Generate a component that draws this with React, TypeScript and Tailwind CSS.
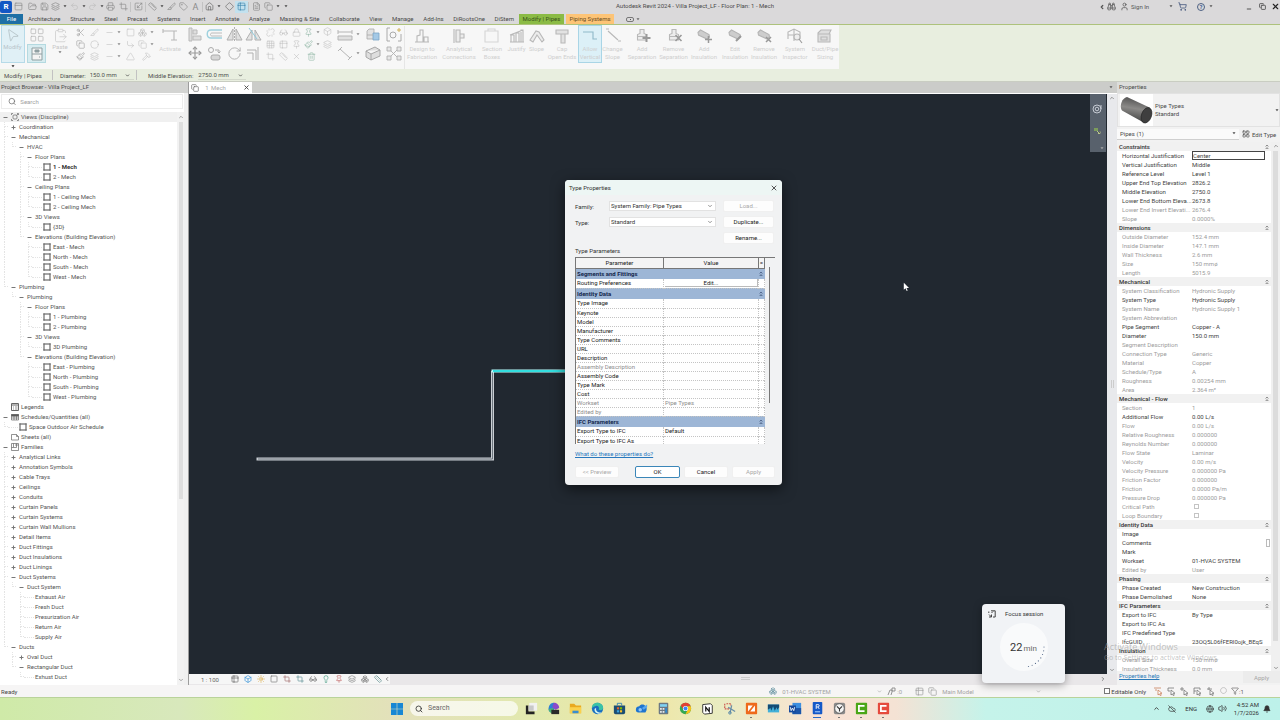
import React from "react";
import type { ReactNode } from "react";
import {
  Box, Boxes, Binoculars, User, ShoppingCart, Volume2, Globe, Bell, ChevronUp, ChevronDown, ChevronLeft, ChevronRight,
  Sun, Glasses, Save, FolderOpen, Undo2, Redo2, Printer, Ruler, House, Search, Scissors, Copy, Move, RotateCw, X, Lock,
  Grid3x3, Paintbrush, MousePointer2, Square, Filter, Pin, Minus, Layers, Table2, Trash2,
  Diamond, ClipboardPaste, Lightbulb, CloudOff, Circle, Crop, Tag, Scaling, Triangle, Hammer, LayoutGrid,
  CornerDownRight, Unlink, FileText, PanelTop, Slice,
} from "lucide-react";

type IconType = React.ComponentType<{ size?: number; strokeWidth?: number; className?: string }>;

/* ---------- shared bits ---------- */

const Caret = ({ className = "" }: { className?: string }) => (
  <svg width="4" height="3" viewBox="0 0 4 3" className={`shrink-0 ${className}`} aria-hidden="true">
    <path d="M.5.300h3L2 2.300z" fill="currentColor" />
  </svg>
);

const Collapse = () => (
  <svg width="4" height="6" viewBox="0 0 4 6" fill="none" stroke="currentColor" strokeWidth=".7" className="relative" aria-hidden="true">
    <path d="M.8 2.400 2 1.200l1.200 1.200M.8 4.900 2 3.700l1.200 1.200" />
  </svg>
);

/* ---------- title bar ---------- */

const Quick = ({ icon: I, w, caret, on }: { icon: IconType; w: string; caret?: boolean; on?: boolean }) => (
  <button className={`flex h-[12px] shrink-0 items-center justify-center gap-[3px] ${w} ${on ? "bg-[#c3e1ee] text-[#3f87b0]" : ""}`}>
    <I size={9} strokeWidth={1.8} />
    {caret && <Caret className="text-[#444]" />}
  </button>
);

const Divider = () => <span className="h-[10px] w-px shrink-0 bg-[#c2c2c2]" />;

const TitleBar = () => (
  <header className="flex h-[13px] shrink-0 items-center bg-[#dad9da] text-[#8a8a8a]">
    <div className="flex items-center">
      <button className="flex h-[12px] w-[12px] items-center justify-center rounded-[2px] bg-[#1257c4] text-[8px] font-bold leading-none text-white">R</button>
      <Quick icon={PanelTop} w="w-[13px]" />
      <Quick icon={FolderOpen} w="w-[14px]" />
      <Quick icon={Save} w="w-[11px]" />
      <Quick icon={Layers} w="w-[18px]" caret />
      <div className="flex text-[#bdbdbd]">
        <Quick icon={Undo2} w="w-[19px]" caret />
        <Quick icon={Redo2} w="w-[17px]" caret />
      </div>
      <Quick icon={Printer} w="w-[12px]" />
      <Quick icon={Crop} w="w-[14px]" />
      <Divider />
      <Quick icon={Scaling} w="w-[14px]" />
      <Divider />
      <Quick icon={Ruler} w="w-[19px]" caret />
      <Quick icon={Slice} w="w-[12px]" />
      <Quick icon={Tag} w="w-[12px]" />
      <button className="w-[13px] text-[9px] leading-[12px]">A</button>
      <Divider />
      <div className="flex text-[#666]">
        <Quick icon={House} w="w-[20px]" caret />
        <Quick icon={Diamond} w="w-[12px]" />
      </div>
      <Quick icon={Table2} w="w-[13px]" on />
      <Divider />
      <Quick icon={FileText} w="w-[14px]" />
      <Quick icon={Copy} w="w-[18px]" caret />
      <button className="flex w-[10px] justify-center text-[#444]" aria-label="Customize"><Caret /></button>
    </div>
    <h1 className="h-[11px] flex-1 text-center leading-[9px] text-[#4a4a4a]">Autodesk Revit 2024 - Villa Project_LF - Floor Plan: 1 - Mech</h1>
    <div className="flex items-center justify-end text-[#555]">
      <ChevronLeft size={6} strokeWidth={5} />
      <span className="flex w-[13px] justify-center"><Binoculars size={9} /></span>
      <span className="flex w-[13px] justify-center"><User size={9} /></span>
      <button className="w-[21px] whitespace-nowrap text-left">Sign In</button>
      <span className="flex w-[24px] justify-end pr-[3px]"><Caret /></span>
      <span className="flex w-[12px] justify-center text-[#3b4f78]"><ShoppingCart size={9} /></span>
      <button className="ml-[9px] flex h-[8px] w-[8px] items-center justify-center rounded-full border border-[#4d6183] text-[6px] font-bold leading-none text-[#3d5a94]">?</button>
      <span className="ml-[4px]"><Caret /></span>
      <button className="ml-[31px] flex w-[10px] justify-center pt-[4px]" aria-label="Minimize"><Minus size={6} strokeWidth={4} /></button>
      <button className="flex w-[16px] justify-center" aria-label="Restore"><Copy size={7} strokeWidth={3} /></button>
      <button className="flex w-[10px] justify-center text-[#222]" aria-label="Close"><X size={9} strokeWidth={3} /></button>
    </div>
  </header>
);

const TABS = ["Architecture", "Structure", "Steel", "Precast", "Systems", "Insert", "Annotate", "Analyze", "Massing & Site", "Collaborate", "View", "Manage", "Add-Ins", "DiRootsOne", "DiStem"];

const TabRow = () => (
  <nav className="flex h-[12px] shrink-0 items-stretch border-b border-[#adc27c] bg-[#dad9da] pt-px leading-[10px] text-[#484848]">
    <button className="w-[23px] shrink-0 bg-[#1d6fa5] text-white">File</button>
    <div className="ml-[5px] mr-[5px] flex w-[486px] shrink-0 justify-between">
      {TABS.map((t) => (
        <button key={t} className="whitespace-nowrap">{t}</button>
      ))}
    </div>
    <button className="w-[45px] whitespace-nowrap bg-[#8bbb45] text-[#37521a]">Modify | Pipes</button>
    <button className="ml-[2px] w-[48px] whitespace-nowrap bg-[#fdc476] text-[#6b4d1e]">Piping Systems</button>
    <button className="ml-[12px] flex items-center gap-[2px]" aria-label="Minimize ribbon">
      <span className="flex h-[5px] w-[8px] items-center justify-center rounded-[2px] border border-[#777]"><span className="h-px w-px bg-[#555]" /></span>
      <Caret className="text-[#666]" />
    </button>
  </nav>
);

/* ---------- ribbon ---------- */

const Stack = ({ w, icons, size = 9, tone = "text-[#bcbcbc]", carets = 0 }: { w: string; icons: IconType[]; size?: number; tone?: string; carets?: number }) => (
  <div className={`flex shrink-0 flex-col items-center ${w} ${tone} ${icons.length > 2 ? "gap-[3px] pt-[2px]" : "gap-[4px] pt-[1px]"}`}>
    {icons.map((I, i) => (
      <button key={i} className="flex items-center gap-[3px]">
        <I size={size} strokeWidth={1.4} />
        {i < carets && <Caret className="text-[#888]" />}
      </button>
    ))}
  </div>
);

const Tool = ({ w, lines, on, children }: { w: string; lines: string[]; on?: boolean; children: ReactNode }) => (
  <button className={`flex h-[36px] shrink-0 flex-col items-center whitespace-nowrap pt-px leading-[8px] text-[#cfcfcf] ${w} ${on ? "bg-[#dcf0f7] outline outline-[#a9d5e6]" : ""}`}>
    <svg width="18" height="18" viewBox="0 0 18 18" fill="none" stroke="#b8b8b8" strokeWidth="1.1" className="shrink-0" aria-hidden="true">{children}</svg>
    {lines.map((l) => <span key={l}>{l}</span>)}
  </button>
);

const pipe = <path d="M3 5.5 5.500 3 14 7.500 14.500 10 12 12 3.500 8z" fill="#cdcdcd" stroke="#b4b4b4" />;
const valve = <path d="M7 2.500h4v4l2.500 1V13h-9V7.500l2.500-1zM4.500 9.500h9" fill="#ececec" />;

const Ribbon = () => (
  <section className="flex h-[44px] shrink-0 overflow-hidden bg-[#e8eedf]" aria-label="Ribbon">
    <div className="flex bg-[#f7f7f7] pt-px">
      <div className="flex w-[26px] flex-col items-center gap-[2px] pr-px">
        <button className="flex h-[36px] w-[22px] flex-col items-center bg-[#e0f0f6] pt-[2px] leading-[8px] text-[#b7c3c9] outline outline-[#b6dae8]">
          <MousePointer2 size={15} strokeWidth={1} className="rotate-12 text-[#a9b6bb]" />
          Modify
        </button>
        <Caret className="mt-px text-[#222]" />
      </div>
      <div className="flex w-[21px] flex-col items-center gap-[2px] pt-px text-[#b0b0b0]">
        <button aria-label="Properties"><LayoutGrid size={16} strokeWidth={1} /></button>
        <button className="flex h-[17px] w-[17px] items-center justify-center bg-[#d7ecf0] outline outline-[#b4d9e0]" aria-label="Type Properties">
          <svg width="12" height="14" viewBox="0 0 12 14" fill="#f4f4f4" stroke="#8f9fa2"><path d="M1 1h10v12H1zM1 7h10" /><path d="M4 3h4v2H4zM8 10h1" fill="#8f9fa2" /></svg>
        </button>
      </div>
      <button className="flex w-[26px] flex-col items-center pt-[2px] leading-[8px] text-[#c6c6c6]">
        <ClipboardPaste size={15} strokeWidth={1.1} />
        Paste
        <Caret className="text-[#777]" />
      </button>
      <Stack w="w-[14px]" icons={[Scissors, Copy, Paintbrush]} tone="text-[#8f8f8f]" />
      <Stack w="w-[15px]" icons={[Slice, Circle, Layers]} />
      <Stack w="w-[22px]" icons={[Minus, Minus, Minus]} carets={3} />
      <Stack w="w-[13px]" icons={[Square, CornerDownRight, Triangle]} />
      <Stack w="w-[18px]" icons={[Boxes, Copy, Hammer]} carets={2} />
      <Tool w="w-[30px]" lines={["Activate"]}><path d="M2 4h11v9M2 2v4M13 4h3M10 13h6" /></Tool>
      <div className="flex w-[19px] flex-col items-center gap-[4px] pt-px text-[#999]">
        <svg width="15" height="15" viewBox="0 0 15 15" fill="#dedede" stroke="#b9b9b9" aria-hidden="true"><path d="M2 1h3v13H2zM6 9h8v4H6zM6 3h4v4H6z" /></svg>
        <Move size={14} strokeWidth={2} />
      </div>
      <div className="flex w-[21px] flex-col items-center gap-[4px] pt-px">
        <svg width="17" height="15" viewBox="0 0 17 15" fill="none" aria-hidden="true"><path d="M16 3H5C0 3 0 11 5 11h11" stroke="#9ed1de" strokeWidth="1.400" /><path d="M16 6H6c-2 0-2 3 0 3h10" stroke="#bbb" /></svg>
        <svg width="15" height="15" viewBox="0 0 15 15" fill="none" stroke="#ababab" aria-hidden="true"><circle cx="4" cy="4" r="2.500" /><path d="M8 4h4v3M10.500 5.500 12 7l1.500-1.500" /><rect x="4" y="9" width="9" height="5" rx="2" fill="#d6d6d6" /></svg>
      </div>
      <div className="flex w-[18px] flex-col items-center gap-[4px] pt-px text-[#b0b0b0]">
        <svg width="17" height="15" viewBox="0 0 17 15" fill="none" stroke="#b0b0b0" aria-hidden="true"><path d="M7 2v11H1zM10 2v11h6z" fill="#e0e0e0" /><path d="M8.500 0v15" strokeDasharray="2 1" /></svg>
        <RotateCw size={15} strokeWidth={1.5} />
      </div>
      <div className="flex w-[21px] flex-col items-center gap-[4px] pt-px">
        <svg width="17" height="15" viewBox="0 0 17 15" fill="none" stroke="#b0b0b0" aria-hidden="true"><path d="M7 3v10H1zM10 3v10h6z" fill="#e4e4e4" /><path d="m4 1 8 11" stroke="#8fc9da" /></svg>
        <svg width="15" height="15" viewBox="0 0 15 15" fill="none" stroke="#b0b0b0" aria-hidden="true"><path d="M1 4h9v10M1 7h6v7M12 1v13" /></svg>
      </div>
      <Stack w="w-[13px]" icons={[Unlink, Grid3x3, Crop]} />
      <Stack w="w-[13px]" icons={[Glasses, Table2, Ruler]} />
      <Stack w="w-[13px]" icons={[Lock, Pin, X]} />
      <Stack w="w-[17px]" icons={[Pin, Paintbrush, Trash2]} carets={2} tone="text-[#86b09e]" />
      <Stack w="w-[15px]" icons={[Box, Layers]} />
      <div className="flex w-[27px] flex-col items-center gap-[4px] pt-px text-[#888]">
        <span className="flex items-center gap-[3px]"><svg width="16" height="15" viewBox="0 0 16 15" stroke="#b5b5b5" fill="#e0e0e0" aria-hidden="true"><path d="M1 3v4M15 3v4M1 5h14M1 9h14v4H1z" /></svg><Caret /></span>
        <span className="flex items-center gap-[3px]"><svg width="16" height="15" viewBox="0 0 16 15" stroke="#b5b5b5" fill="none" aria-hidden="true"><path d="M3 3l10 9M1 5l4-4M11 14l4-4" /></svg><Caret /></span>
      </div>
      <div className="flex w-[22px] flex-col items-center gap-[4px] pt-px">
        <svg width="16" height="15" viewBox="0 0 16 15" stroke="#aaa" strokeWidth=".8" aria-hidden="true"><path d="M2 4l2-2h5v10H2z" fill="#e2e2e2" /><path d="M8 6h6v7H8z" fill="#a4c9e6" stroke="#7ba4c5" /><path d="M2 8h6" /></svg>
        <svg width="16" height="15" viewBox="0 0 16 15" stroke="#a0a0a0" strokeWidth=".9" fill="#dedede" aria-hidden="true"><path d="M1 5l9-4 5 3v6l-9 4-5-3zM1 5l5 3 9-4M6 8v6" /></svg>
      </div>
      <div className="flex w-[20px] flex-col items-center gap-[4px] pt-px">
        <svg width="16" height="15" viewBox="0 0 16 15" stroke="#aaa" fill="none" aria-hidden="true"><path d="M4 1H1v13h3M12 14h3V7" /><circle cx="7" cy="8" r="3" /><path d="M13 1v4M11 3h4" stroke="#d0b25a" /></svg>
        <svg width="16" height="15" viewBox="0 0 16 15" stroke="#b0b0b0" strokeWidth=".9" fill="#e8e8e8" aria-hidden="true"><path d="m3 3 9 9M12 3 3 12" /><path d="M1 1h4v4H1zM11 1h4v4h-4zM1 10h4v4H1zM11 10h4v4h-4z" /></svg>
      </div>
      <div className="flex border-l border-[#e6e6e6]">
        <Tool w="w-[34px]" lines={["Design to", "Fabrication"]}><path d="M4 15V9l3-1V3h3v12M2 15h14M11 15v-5h4v5" /></Tool>
        <Tool w="w-[40px]" lines={["Analytical", "Connections"]}><path d="M6 3h4v12H6zM10 7h4v4h-4M4 2v14" fill="#ececec" /></Tool>
        <Tool w="w-[26px]" lines={["Section", "Boxes"]}><path d="M2 4h13v11H2zM5 4V2h7v2" stroke="#d6d6d6" /></Tool>
        <Tool w="w-[23px]" lines={["Justify"]}><path d="M2 15h14M3 15V8h3v7M8 15V6h3v9M13 15V3h2v12M2 8l13-5" /></Tool>
        <Tool w="w-[17px]" lines={["Slope"]}><path d="M2 13 8 4l3 1 5 8-2 2-5-7-4 7z" fill="#ececec" /></Tool>
        <Tool w="w-[34px]" lines={["Cap", "Open Ends"]}><path d="M3 3h12v4H3zM8 7h4v9H8z" fill="#e2e2e2" /></Tool>
        <Tool w="w-[22px]" lines={["Allow", "Vertical"]} on><path d="M2 5h10v7h4" stroke="#8fb9c9" /></Tool>
        <Tool w="w-[23px]" lines={["Change", "Slope"]}><path d="M2 2h3M4 4l10 9M14 14h3" /></Tool>
        <Tool w="w-[36px]" lines={["Add", "Separation"]}>{valve}<path d="M13.500 7v8M9.500 11h8" stroke="#999" strokeWidth="2" /></Tool>
        <Tool w="w-[27px]" lines={["Remove", "Separation"]}>{valve}<path d="m10.500 8 6 6m0-6-6 6" stroke="#999" strokeWidth="1.600" /></Tool>
        <Tool w="w-[34px]" lines={["Add", "Insulation"]}>{pipe}<path d="M13.500 9v7M10 12.500h7" stroke="#999" strokeWidth="1.500" /></Tool>
        <Tool w="w-[28px]" lines={["Edit", "Insulation"]}>{pipe}<path d="m10 14 5-5" stroke="#999" strokeWidth="2" /></Tool>
        <Tool w="w-[30px]" lines={["Remove", "Insulation"]}>{pipe}<path d="m11 10 5 5m0-5-5 5" stroke="#999" strokeWidth="1.500" /></Tool>
        <Tool w="w-[32px]" lines={["System", "Inspector"]}><path d="M2 12V5l6-3 6 3v7M8 2v12M2 8h12" /><circle cx="11" cy="10" r="3" fill="#eee" /><path d="m13 12 3 4" stroke="#999" /></Tool>
        <Tool w="w-[28px]" lines={["Duct/Pipe", "Sizing"]}><path d="M2 6l3-3h10l-2 4H2zM2 7h12v8H2zM5 10h6v3H5z" fill="#dedede" /></Tool>
      </div>
    </div>
  </section>
);

const OptionsBar = () => (
  <section className="flex h-[13px] shrink-0 items-center border-b border-[#c9cdc2] bg-[#e8eedf] pl-[4px] text-[#4f4f4f]" aria-label="Options">
    <span className="w-[48px] whitespace-nowrap">Modify | Pipes</span>
    <Divider />
    <label className="flex w-[84px] items-center gap-[4px] pl-[7px]">
      Diameter:
      <select className="w-[44px] appearance-none border-b border-[#d3d8cb] outline-none"><option>150.0 mm</option></select>
    </label>
    <ChevronDown size={5} strokeWidth={4} className="-ml-[12px] mr-[6px]" />
    <Divider />
    <label className="ml-[11px] flex items-center gap-[5px]">
      Middle Elevation:
      <select className="w-[48px] appearance-none border-b border-[#d3d8cb] outline-none"><option>2750.0 mm</option></select>
    </label>
    <ChevronDown size={5} strokeWidth={4} className="-ml-[8px]" />
  </section>
);

/* ---------- project browser ---------- */

type Kind = "views" | "view" | "legend" | "schedule" | "sheet" | "family";
type Node = { level: number; label: string; sign?: "+" | "-"; kind?: Kind; bold?: boolean };
const n = (level: number, label: string, sign?: "+" | "-", kind?: Kind, bold?: boolean): Node => ({ level, label, sign, kind, bold });
const v = (label: string, bold?: boolean) => n(4, label, undefined, "view", bold);

const TREE: Node[] = [
  n(0, "Views (Discipline)", "-", "views"), n(1, "Coordination", "+"), n(1, "Mechanical", "-"), n(2, "HVAC", "-"),
  n(3, "Floor Plans", "-"), v("1 - Mech", true), v("2 - Mech"),
  n(3, "Ceiling Plans", "-"), v("1 - Ceiling Mech"), v("2 - Ceiling Mech"),
  n(3, "3D Views", "-"), v("{3D}"),
  n(3, "Elevations (Building Elevation)", "-"), v("East - Mech"), v("North - Mech"), v("South - Mech"), v("West - Mech"),
  n(1, "Plumbing", "-"), n(2, "Plumbing", "-"),
  n(3, "Floor Plans", "-"), v("1 - Plumbing"), v("2 - Plumbing"),
  n(3, "3D Views", "-"), v("3D Plumbing"),
  n(3, "Elevations (Building Elevation)", "-"), v("East - Plumbing"), v("North - Plumbing"), v("South - Plumbing"), v("West - Plumbing"),
  n(0, "Legends", undefined, "legend"), n(0, "Schedules/Quantities (all)", "-", "schedule"), n(1, "Space Outdoor Air Schedule", undefined, "view"),
  n(0, "Sheets (all)", undefined, "sheet"), n(0, "Families", "-", "family"),
  ...["Analytical Links", "Annotation Symbols", "Cable Trays", "Ceilings", "Conduits", "Curtain Panels", "Curtain Systems", "Curtain Wall Mullions", "Detail Items", "Duct Fittings", "Duct Insulations", "Duct Linings"].map((l) => n(1, l, "+")),
  n(1, "Duct Systems", "-"), n(2, "Duct System", "-"),
  n(3, "Exhaust Air"), n(3, "Fresh Duct"), n(3, "Presurization Air"), n(3, "Return Air"), n(3, "Supply Air"),
  n(1, "Ducts", "-"), n(2, "Oval Duct", "+"), n(2, "Rectangular Duct", "-"), n(3, "Exhust Duct"),
];

const KIND_PATHS: Record<Kind, ReactNode> = {
  views: <><rect x="2" y="2" width="4" height="4" rx="1" /><path d="M.5 2V.5H2M6 .5h1.500V2M7.500 6v1.500H6M2 7.500H.5V6M5.500 2.500 7 1" /></>,
  view: <path d="M1 1h6v6H1zM0 1h8M0 7h8M1 0v8M7 0v8" strokeWidth=".7" />,
  legend: <><path d="M.5.5h7v7h-7zM.5 2h7" strokeWidth="1" /><path d="M2 4h1M4 4h2.500M2 6h1M4 6h2.500" /></>,
  schedule: <><path d="M.5 1.500h7v5.500h-7zM.5 3h7M.5 5h7M3 3v4M5.500 3v4" /><path d="M.5 1.500h7V3h-7z" fill="#555" /></>,
  sheet: <path d="M.5 1.500h5l2 2V7h-7zM5.500 1.500v2h2" />,
  family: <path d="M.5.5h7v7h-7zM2.500.5v4h3v-4M.5 4.500h2M4 2h3.500" />,
};

const continues = (index: number, col: number) => {
  for (let j = index + 1; j < TREE.length; j++) {
    if (TREE[j].level <= col) return false;
    if (TREE[j].level === col + 1) return true;
  }
  return false;
};

const TreeRow = ({ node, index }: { node: Node; index: number }) => (
  <li className={`flex h-[10px] items-center whitespace-nowrap leading-[10px] ${index === 0 ? "bg-[#f0f0f0]" : ""} ${node.bold ? "font-bold text-[#333]" : ""}`}>
    {Array.from({ length: node.level }, (_, col) => (
      <span key={col} className="flex h-full w-[8px] shrink-0 justify-end">
        <span className="flex h-full w-[4px] flex-col">
          <span className={`h-[5px] border-dotted border-[#e4e4e4] ${col === node.level - 1 ? "border-b border-l" : continues(index, col) ? "border-l" : ""}`} />
          <span className={`h-[5px] border-dotted border-[#e4e4e4] ${continues(index, col) ? "border-l" : ""}`} />
        </span>
      </span>
    ))}
    <span className="flex w-[10px] shrink-0 justify-center text-[#777]">
      {node.sign ? (
        <svg width="5" height="5" viewBox="0 0 5 5" stroke="currentColor" strokeWidth="1" aria-hidden="true">
          <path d={node.sign === "+" ? "M.5 2.500h4M2.500.5v4" : "M.5 2.500h4"} />
        </svg>
      ) : node.level > 0 ? <span className="w-full border-b border-dotted border-[#e4e4e4]" /> : null}
    </span>
    {node.kind && (
      <svg width="8" height="8" viewBox="0 0 8 8" fill="none" stroke="#666" strokeWidth=".7" className="ml-px mr-px shrink-0" aria-hidden="true">
        {KIND_PATHS[node.kind]}
      </svg>
    )}
    <span className="ml-px">{node.label}</span>
  </li>
);

const ProjectBrowser = () => (
  <aside className="flex w-[189px] shrink-0 flex-col border-r border-[#9c9c9c] bg-[#f0f0f0] text-[#555]">
    <h2 className="h-[11px] shrink-0 bg-[#d3d4d2] pl-px leading-[10px] text-[#4c4c4c]">Project Browser - Villa Project_LF</h2>
    <div className="mr-[4px] flex min-h-0 flex-1 flex-col bg-white">
      <label className="mx-px mt-px flex h-[15px] shrink-0 items-center gap-[4px] border border-[#ececec] pl-[6px]">
        <Search size={9} className="text-[#666]" />
        <input className="w-full text-[#999] outline-none placeholder:text-[#a0a0a0]" placeholder="Search" aria-label="Search" />
      </label>
      <div className="mt-[3px] flex min-h-0 flex-1">
        <ul className="min-w-0 flex-1 overflow-hidden">
          {TREE.map((node, i) => <TreeRow key={i} node={node} index={i} />)}
        </ul>
        <div className="flex w-[7px] flex-col items-center justify-between bg-[#f2f2f2] text-[#888]">
          <ChevronUp size={6} strokeWidth={3} className="mt-[2px]" />
          <span className="mb-auto mt-[2px] h-[377px] w-[4px] bg-[#dedede]" />
          <ChevronDown size={6} strokeWidth={3} className="mb-[2px]" />
        </div>
      </div>
    </div>
  </aside>
);

/* ---------- type properties dialog ---------- */

const DialogButton = ({ w, children, off, primary }: { w: string; children: ReactNode; off?: boolean; primary?: boolean }) => (
  <button disabled={off} className={`h-[12px] rounded-[2px] border leading-[10px] ${w} ${primary ? "border-[#3a86b8] bg-white" : "border-[#f0f0f0] bg-[#fdfdfd]"} ${off ? "bg-[#f7f7f7] text-[#a8a8a8]" : "text-[#222]"}`}>{children}</button>
);

const DialogSelect = ({ id, value }: { id: string; value: string }) => (
  <span className="flex h-[10px] w-[107px] items-center border border-[#e2e2e2] bg-white pr-[2px]">
    <select id={id} className="h-[8px] min-w-0 flex-1 appearance-none pl-px leading-[8px] outline-none"><option>{value}</option></select>
    <ChevronDown size={6} strokeWidth={2} />
  </span>
);

type Param = { name: string; value?: string; off?: boolean; head?: boolean };
const TYPE_PARAMS: Param[] = [
  { name: "Segments and Fittings", head: true }, { name: "Routing Preferences", value: "Edit..." },
  { name: "Identity Data", head: true }, { name: "Type Image" }, { name: "Keynote" }, { name: "Model" }, { name: "Manufacturer" },
  { name: "Type Comments" }, { name: "URL" }, { name: "Description" }, { name: "Assembly Description", off: true }, { name: "Assembly Code" },
  { name: "Type Mark" }, { name: "Cost" }, { name: "Workset", value: "Pipe Types", off: true }, { name: "Edited by", off: true },
  { name: "IFC Parameters", head: true }, { name: "Export Type to IFC", value: "Default" }, { name: "Export Type to IFC As" },
];

const TypeDialog = () => (
  <div role="dialog" aria-label="Type Properties" className="absolute left-[376px] top-[86px] flex w-[217px] flex-col rounded-[4px] bg-[#f1f2f3] pb-[7px] text-[#333] shadow-[0_4px_14px_rgba(0,0,0,0.55)]">
    <div className="flex h-[15px] items-center justify-between rounded-t-[4px] bg-[#edf6f4] pl-[4px] pr-[4px]">
      <h2>Type Properties</h2>
      <button aria-label="Close"><X size={8} strokeWidth={2.5} /></button>
    </div>
    <div className="mt-[5px] flex justify-between pl-[10px] pr-[8px]">
      <div className="flex flex-col gap-[6px] pt-px">
        <div className="flex items-center"><label htmlFor="family" className="w-[34px]">Family:</label><DialogSelect id="family" value="System Family: Pipe Types" /></div>
        <div className="flex items-center"><label htmlFor="type" className="w-[34px]">Type:</label><DialogSelect id="type" value="Standard" /></div>
      </div>
      <div className="flex flex-col gap-[4px]">
        <DialogButton w="w-[51px]" off>Load...</DialogButton>
        <DialogButton w="w-[51px]">Duplicate...</DialogButton>
        <DialogButton w="w-[51px]">Rename...</DialogButton>
      </div>
    </div>
    <h3 className="mt-px h-[12px] pl-[10px] leading-[11px]">Type Parameters</h3>
    <div className="ml-[10px] mr-[7px] flex h-[187px] gap-[4px] overflow-hidden border-t border-[#777]">
      <table className="w-[190px] table-fixed border-collapse self-start bg-white leading-[8px] text-[#222]">
        <thead>
          <tr className="h-[10px] bg-[#f4f4f4]">
            <th className="w-[88px] border border-t-0 border-[#777] p-0 font-normal">Parameter</th>
            <th className="border border-t-0 border-[#777] p-0 font-normal">Value</th>
            <th className="w-[6px] border border-t-0 border-[#777] p-0 font-normal">=</th>
          </tr>
        </thead>
        <tbody>
          {TYPE_PARAMS.map((p) => p.head ? (
            <tr key={p.name} className="h-[11px] bg-[#9db6d6] font-bold text-[#14284d]">
              <td colSpan={2} className="border-l border-[#777] p-0 pl-px">{p.name}</td>
              <td className="p-0"><Collapse /></td>
            </tr>
          ) : (
            <tr key={p.name} className={`h-[9px] border-b border-dotted border-[#c4c4c4] ${p.off ? "text-[#8d8d8d]" : ""}`}>
              <td className="truncate border-l border-[#777] p-0 pl-px">{p.name}</td>
              <td className="border-x border-dotted border-[#c4c4c4] p-0 pl-px">
                {p.value === "Edit..." ? <button className="block h-[8px] w-full border-b border-r border-[#bbb] leading-[7px]">{p.value}</button> : p.value}
              </td>
              <td className="border-r border-dotted border-[#c4c4c4] p-0" />
            </tr>
          ))}
        </tbody>
      </table>
      <span className="mt-[9px] h-[136px] w-px bg-[#777]" />
    </div>
    <a href="#help" className="ml-[10px] mt-[5px] h-[9px] self-start leading-[9px] text-[#2878bd] underline">What do these properties do?</a>
    <div className="ml-[10px] mr-[7px] mt-[8px] flex justify-between">
      <DialogButton w="w-[44px]" off>&lt;&lt; Preview</DialogButton>
      <span className="w-[8px]" />
      <DialogButton w="w-[45px]" primary>OK</DialogButton>
      <DialogButton w="w-[44px]">Cancel</DialogButton>
      <DialogButton w="w-[43px]" off>Apply</DialogButton>
    </div>
  </div>
);

/* ---------- drawing area ---------- */

const VIEW_ICONS: [IconType, string][] = [
  [Table2, "text-[#666]"], [Box, "text-[#2f8fd8]"], [Sun, "text-[#d9a437]"], [Square, "text-[#777]"], [Crop, "text-[#a06a6a]"], [Crop, "text-[#5b8f95]"],
  [Glasses, "text-[#777]"], [Lightbulb, "text-[#3f9a80]"], [Pin, "text-[#c46a6a]"], [Layers, "text-[#888]"], [Boxes, "text-[#888]"], [Ruler, "text-[#5f9090]"],
];

const DrawingArea = () => (
  <main className="flex min-w-0 flex-1 flex-col">
    <div className="flex h-[12px] shrink-0 items-stretch border-b border-white bg-[#cbccc9]">
      <button className="flex w-[63px] items-center bg-white pl-[2px] pr-[2px] text-[#a5a5a5]">
        <Copy size={8} className="text-[#666]" />
        <span className="ml-[4px] w-[8px]">1</span>Mech
        <X size={7} strokeWidth={3} className="ml-auto text-[#444]" />
      </button>
      <span className="ml-auto flex w-[8px] items-center text-[#555]"><Caret /></span>
    </div>
    <div className="flex min-h-0 flex-1">
      <div className="relative min-w-0 flex-1 bg-[#212830]">
        <svg width="400" height="400" className="absolute left-0 top-0" fill="none" aria-hidden="true">
          <path d="M67.500 365H303.500V277" stroke="#c9ced3" strokeWidth="3" />
          <path d="M69 365H303.500V277" stroke="#6e767e" strokeWidth="1" />
          <path d="M302.500 277H380" stroke="#b9ffff" strokeWidth="3" />
          <path d="M304 277H380" stroke="#33dfe0" strokeWidth="2" />
        </svg>
        <div className="absolute right-px top-0 flex h-[58px] w-[16px] flex-col items-center bg-[#58616c] pr-[2px] pt-[10px] text-[#c5cad2]">
          <svg width="10" height="10" viewBox="0 0 10 10" fill="none" stroke="currentColor" aria-hidden="true"><circle cx="5" cy="5" r="4" /><circle cx="5" cy="5" r="1.800" /><path d="M9 1v4" /></svg>
          <svg width="8" height="8" viewBox="0 0 8 8" className="mt-[13px]" aria-hidden="true"><path d="M1 1h4v3H1z" fill="#7c9c5c" /><path d="M4 4l3 3M5 6.500h2v-2" stroke="#b8c48c" /></svg>
          <Caret className="mb-[2px] ml-auto mt-auto text-[#aaa]" />
        </div>
        <TypeDialog />
        <svg width="7" height="10" viewBox="0 0 7 10" className="absolute left-[714px] top-[188px]" aria-hidden="true">
          <path d="M.8.8v7l1.700-1.500 1.200 2.700 1-.5-1.200-2.500H6z" fill="#fff" />
        </svg>
      </div>
      <div className="flex w-[10px] flex-col items-center justify-between bg-[#e8e9ec] py-px text-[#777]">
        <ChevronUp size={6} strokeWidth={3} />
        <span className="h-[8px] w-[3px] border-x border-[#ccc]" />
        <ChevronDown size={6} strokeWidth={3} />
      </div>
    </div>
    <div className="flex h-[11px] shrink-0 items-start bg-[#e9e7e9]">
      <div className="flex h-[10px] items-center bg-[#f6f6f6] pl-[12px] text-[#666]">
        <span className="w-[27px]">1 : 100</span>
        {VIEW_ICONS.map(([I, tone], i) => (
          <button key={i} className={`flex w-[13px] justify-center ${tone}`} aria-label="View control"><I size={8} strokeWidth={2} /></button>
        ))}
        <ChevronLeft size={6} strokeWidth={3} />
      </div>
      <span className="mx-auto mt-[3px] h-[3px] w-[9px] border-y border-[#ccc]" />
      <ChevronRight size={6} strokeWidth={3} className="mr-[11px] mt-[2px] text-[#666]" />
    </div>
  </main>
);

/* ---------- properties palette ---------- */

type Prop = [name: string, value?: string, tone?: "off" | "head" | "check" | "edit"];
const PROPS: Prop[] = [
  ["Constraints", "", "head"], ["Horizontal Justification", "Center", "edit"], ["Vertical Justification", "Middle"], ["Reference Level", "Level 1"],
  ["Upper End Top Elevation", "2826.2"], ["Middle Elevation", "2750.0"], ["Lower End Bottom Eleva...", "2673.8"], ["Lower End Invert Elevati...", "2676.4", "off"], ["Slope", "0.0000%", "off"],
  ["Dimensions", "", "head"], ["Outside Diameter", "152.4 mm", "off"], ["Inside Diameter", "147.1 mm", "off"], ["Wall Thickness", "2.6 mm", "off"], ["Size", "150 mmø", "off"], ["Length", "5015.9", "off"],
  ["Mechanical", "", "head"], ["System Classification", "Hydronic Supply", "off"], ["System Type", "Hydronic Supply"], ["System Name", "Hydronic Supply 1", "off"], ["System Abbreviation", "", "off"],
  ["Pipe Segment", "Copper - A"], ["Diameter", "150.0 mm"], ["Segment Description", "", "off"], ["Connection Type", "Generic", "off"], ["Material", "Copper", "off"],
  ["Schedule/Type", "A", "off"], ["Roughness", "0.00254 mm", "off"], ["Area", "2.364 m²", "off"],
  ["Mechanical - Flow", "", "head"], ["Section", "1", "off"], ["Additional Flow", "0.00 L/s"], ["Flow", "0.00 L/s", "off"], ["Relative Roughness", "0.000000", "off"],
  ["Reynolds Number", "0.000000", "off"], ["Flow State", "Laminar", "off"], ["Velocity", "0.00 m/s", "off"], ["Velocity Pressure", "0.000000 Pa", "off"],
  ["Friction Factor", "0.000000", "off"], ["Friction", "0.0000 Pa/m", "off"], ["Pressure Drop", "0.000000 Pa", "off"], ["Critical Path", "", "check"], ["Loop Boundary", "", "check"],
  ["Identity Data", "", "head"], ["Image"], ["Comments"], ["Mark"], ["Workset", "01-HVAC SYSTEM"], ["Edited by", "User", "off"],
  ["Phasing", "", "head"], ["Phase Created", "New Construction"], ["Phase Demolished", "None"],
  ["IFC Parameters", "", "head"], ["Export to IFC", "By Type"], ["Export to IFC As"], ["IFC Predefined Type"], ["IfcGUID", "23OQ5L06fFERI0ojk_BEqS"],
  ["Insulation", "", "head"], ["Overall Size", "150 mmø", "off"], ["Insulation Thickness", "0.0 mm", "off"],
];

const PropRow = ([name, value, tone]: Prop) =>
  tone === "head" ? (
    <tr key={name} className="h-[9px] bg-[#f1f1f1] text-[#333]">
      <th colSpan={2} className="p-0 pl-[2px] text-left font-medium">{name}</th>
      <td className="p-0"><Collapse /></td>
    </tr>
  ) : (
    <tr key={name} className={`h-[9px] whitespace-nowrap ${tone === "off" || tone === "check" ? "text-[#9c9c9c]" : "text-[#444]"}`}>
      <td className="p-0 pl-[5px]">{name}</td>
      <td className="p-0">
        {tone === "check" ? (
          <input type="checkbox" aria-label={name} className="ml-[2px] block h-[5px] w-[5px] appearance-none border border-[#c4c4c4]" />
        ) : tone === "edit" ? (
          <input aria-label={name} defaultValue={value} className="block h-[9px] w-full border border-[#444] leading-[7px] outline-none" />
        ) : value}
      </td>
      <td className="p-0">{name === "Comments" && <span className="ml-px block h-[8px] w-[4px] border border-[#bbb]" />}</td>
    </tr>
  );

const Properties = () => (
  <aside className="flex w-[163px] shrink-0 flex-col bg-[#f2f2f2] text-[#4a4a4a]">
    <h2 className="h-[11px] shrink-0 bg-[#dcdddb] pl-[2px] leading-[10px]">Properties</h2>
    <div className="flex h-[34px] shrink-0 items-center gap-[2px] border border-[#e2e2e2] pl-[2px] leading-[8px]">
      <svg width="33" height="32" viewBox="0 0 33 32" className="bg-white" aria-hidden="true">
        <defs>
          <linearGradient id="tube" x1="0.600" y1="0" x2="0.400" y2="1">
            <stop offset="0" stopColor="#4c4c4c" /><stop offset=".45" stopColor="#8b8a88" /><stop offset="1" stopColor="#3a3a3a" />
          </linearGradient>
        </defs>
        <path d="M7 3 29.500 13.500C33 19 30 28 24.500 29L2 16.500C-1 12 2 4 7 3z" fill="url(#tube)" />
        <ellipse cx="26.500" cy="21.300" rx="5" ry="8" transform="rotate(20 26.500 21.300)" fill="#3f3f3f" stroke="#222" strokeWidth=".6" />
      </svg>
      <p className="flex-1">Pipe Types<br />Standard</p>
      <Caret />
    </div>
    <div className="flex h-[14px] shrink-0 items-center">
      <span className="flex h-[11px] w-[122px] items-center border-b border-[#cfcfcf] bg-[#fafafa] pr-[3px]">
        <select aria-label="Selection filter" className="min-w-0 flex-1 appearance-none pl-[3px] outline-none"><option>Pipes (1)</option></select>
        <Caret />
      </span>
      <button className="ml-[3px] flex items-center gap-[2px] whitespace-nowrap"><LayoutGrid size={8} />Edit Type</button>
    </div>
    <div className="mt-px flex min-h-0 flex-1 overflow-hidden">
      <div className="min-w-0 flex-1 overflow-hidden bg-white">
        <table className="w-full table-fixed border-separate border-spacing-0 leading-[9px]">
          <colgroup><col className="w-[75px]" /><col /><col className="w-[6px]" /></colgroup>
          <tbody>{PROPS.map(PropRow)}</tbody>
        </table>
      </div>
      <div className="flex w-[9px] flex-col items-center justify-between bg-[#f0f0f0] text-[#777]">
        <ChevronUp size={6} strokeWidth={3} className="mt-px" />
        <span className="mb-auto mt-[2px] h-[490px] w-[5px] bg-[#dcdcdc]" />
        <ChevronDown size={6} strokeWidth={3} />
      </div>
    </div>
    <div className="flex h-[14px] shrink-0 items-start justify-between pl-[2px]">
      <a href="#properties-help" className="text-[#2a7ab8] underline">Properties help</a>
      <button disabled className="h-[12px] w-[37px] bg-[#ececec] text-[#a5a5a5]">Apply</button>
    </div>
  </aside>
);

/* ---------- status bar, task bar ---------- */

const Pointer = ({ extra }: { extra: string }) => (
  <svg width="9" height="9" viewBox="0 0 9 9" fill="none" stroke="currentColor" strokeWidth=".8" aria-hidden="true">
    <path d="M4 3v5l1.300-1.100L6.300 8.600l.9-.4-.9-1.900H8z" fill="#fff" />
    <path d={extra} />
  </svg>
);

const SELECTORS = ["M0 1h7M1 3h2", "M1 4V1h6M1 4h2", "M1 1h2v2H1z", "M1 7V1h6v2M1 4h2", "M3 0v3M1 2h5"];

const StatusBar = () => (
  <footer className="flex h-[12px] shrink-0 items-center bg-[#f6f5f5] pl-px text-[#444]">
    <span className="flex-1">Ready</span>
    <div className="flex items-center text-[#a3a3a3]">
      <Boxes size={8} className="mr-[5px] text-[#6f9aa8]" />
      <span className="w-[95px]">01-HVAC SYSTEM</span>
      <ChevronDown size={5} strokeWidth={3} />
      <svg width="9" height="9" viewBox="0 0 9 9" fill="none" stroke="#888" strokeWidth=".9" className="ml-[5px]" aria-hidden="true"><path d="M1 8l2-5h2v2M5 1h3v3H5zM4 8l1-3" /></svg>
      <span className="ml-px w-[18px]">:0</span>
      <Table2 size={9} /><Copy size={9} className="ml-[4px]" />
      <span className="ml-[5px] w-[94px]">Main Model</span>
      <ChevronDown size={5} strokeWidth={3} />
    </div>
    <label className="ml-[63px] flex items-center gap-px whitespace-nowrap">
      <input type="checkbox" className="block h-[6px] w-[6px] appearance-none border border-[#777] bg-white" />Editable Only
    </label>
    <div className="ml-[6px] flex text-[#777]">
      {SELECTORS.map((d, i) => (
        <button key={d} aria-label="Selection option" className={`flex w-[13px] justify-center ${i === 0 ? "text-[#c9805b]" : ""}`}><Pointer extra={d} /></button>
      ))}
      <button aria-label="Background processes" className="flex w-[13px] justify-center text-[#aaa]"><Circle size={7} strokeDasharray="3 2" /></button>
      <button className="ml-px flex w-[49px] items-center text-[#666]"><Filter size={8} />:1</button>
    </div>
  </footer>
);

const APPS: { name: string; art: ReactNode; run?: "dot" | "bar" }[] = [
  { name: "Task View", art: <><path d="M5 1h9v9H5z" fill="#f1f1f1" /><path d="M1 4h3v7h7v3H1z" fill="#222" /><path d="M4 4h6v6H4z" fill="#c8c8c8" /></> },
  { name: "Copilot", art: <><path d="M2 6C3 2 6 1 8 1l2 5-4 6C3 12 1 10 2 6z" fill="#2d7fd6" /><path d="M8 1c4 0 6 3 6 6l-4 2-4-3z" fill="#8b49c9" /><path d="M2 8l5-1 1 6c-3 1-6-2-6-5z" fill="#49b675" /><path d="M5 9h9v5H5z" fill="#2a2a2a" /></> },
  { name: "File Explorer", art: <><path d="M1 2h5l2 2h6v9H1z" fill="#e9a91f" /><path d="M1 6h13v7H1z" fill="#fbd14b" /><path d="M4 10h7v3H4z" fill="#3a8ed0" /></> },
  { name: "Edge", art: <><circle cx="7.500" cy="7.500" r="6.500" fill="#1b6fc0" /><path d="M1 7c0-4 3-6 6.500-6S14 4 14 6.500 12 10 9 9c1-3-1-5-3.500-4.500S2 6 1 7z" fill="#3cc3a6" /><path d="M6 7c-1 3 2 6 6 5-3 3-8 1-8-3 0-1 1-2 2-2z" fill="#d5f4f1" /></> },
  { name: "Store", art: <><path d="M1 4h13v8q0 2-2 2H3q-2 0-2-2z" fill="#1c4e74" /><path d="M5 4V1.500h5V4" fill="none" stroke="#2f7fb5" /><path d="M4.500 6h2.500v2.500H4.500z" fill="#e8622c" /><path d="M8 6h2.500v2.500H8z" fill="#7fba00" /><path d="M4.500 9.500h2.500V12H4.500z" fill="#38a3e0" /><path d="M8 9.500h2.500V12H8z" fill="#fcc221" /></> },
  { name: "Cloud Mail", art: <><path d="M1 9c0-3 2-4 4-4 1-3 6-3 7 0 2 1 2 5 0 7H4c-2 0-3-1-3-3z" fill="#1f74cf" /><path d="m8 7 6-4v3l-4 3z" fill="#59a7ee" /><circle cx="6" cy="9" r="2" fill="#8fc4f6" /></> },
  { name: "Calculator", art: <><rect x="2" y="1" width="11" height="13" rx="1" fill="#6d7883" /><path d="M3.500 2.500h8v3h-8z" fill="#7fd2f3" /><path d="M3.500 7h2v2h-2zM6.500 7h2v2h-2zM3.500 10.500h2v2h-2zM6.500 10.500h2v2h-2z" fill="#e5e9ec" /><path d="M9.500 7h2v5.500h-2z" fill="#2f88cc" /></> },
  { name: "Chrome", art: <><circle cx="7.500" cy="7.500" r="6.500" fill="#34a853" /><path d="M2 4a6.500 6.500 0 0 1 11.500 1H7.500L5 9z" fill="#e34133" /><path d="M13.500 5c1.500 4-1 9-6 9l3-6-1-3z" fill="#fbc116" /><circle cx="7.500" cy="7.500" r="3" fill="#fff" /><circle cx="7.500" cy="7.500" r="2.300" fill="#4285f4" /></> },
  { name: "Notion", art: <><path d="m2 3 9-1 2 2v9l-9 1-2-2z" fill="#fff" stroke="#222" /><path d="M5.500 11V6l4 5V6" fill="none" stroke="#111" strokeWidth="1.400" /></> },
  { name: "Snipping Tool", art: <><path d="M2 2v6h6M4 2h5v2" fill="none" stroke="#c9504a" strokeWidth="1.300" strokeDasharray="2 1" /><path d="m6 6 8 5M10 4 8 13" stroke="#6b8fa8" strokeWidth="1.500" /><circle cx="8" cy="12.500" r="1.500" fill="none" stroke="#4c82a6" /></> },
  { name: "PDF Editor", run: "dot", art: <><rect x="1" y="1" width="13" height="13" rx="1" fill="#ee6a1c" /><path d="M3.500 4H9L3.500 11zM11.500 4 6 11h5.500z" fill="#fff" /></> },
  { name: "Task Monitor", art: <><path d="M1 3h13v9H1z" fill="#42b0d8" /><path d="M1 3h13v3l-2 3-1-3-2 4-2-5-2 5-1-3-3 2z" fill="#134c74" /></> },
  { name: "Word", art: <><path d="M4 1h10v13H4z" fill="#3d8fe0" /><path d="M4 7h10v7H4z" fill="#1c54a8" /><rect x="0" y="4" width="8" height="8" fill="#174a9c" /><path d="m1.500 6 1 4L4 7l1.500 3 1-4" fill="none" stroke="#fff" /></> },
  { name: "Revit", run: "bar", art: <><rect x="2" y="0" width="11" height="14" rx="1" fill="#1558c8" /><path d="M6 8V3h2q1.500 0 1.500 1.300T8 5.700H6M8 5.700 9.500 8" fill="none" stroke="#fff" /><path d="M4.500 10.500h6v1.500h-6z" fill="#8db8f2" /></> },
  { name: "Clock", run: "dot", art: <><rect x="1" y="1" width="13" height="13" rx="2" fill="#8a8a8a" /><circle cx="7.500" cy="7.500" r="5.500" fill="#f4f4f4" stroke="#444" strokeWidth=".8" /><path d="m4.500 5 3 3 3-3M7.500 8v3" fill="none" stroke="#333" strokeWidth="1.200" /></> },
  { name: "Camtasia", run: "dot", art: <><rect x="1" y="1" width="13" height="13" rx="1" fill="#4aa617" /><path d="M11 4.500H4.500v6H11" fill="none" stroke="#fff" strokeWidth="2" /></> },
  { name: "Camtasia Recorder", run: "dot", art: <><rect x="1" y="1" width="13" height="13" rx="1" fill="#e54a3d" /><path d="M11 4.500H4.500v6H11" fill="none" stroke="#fff" strokeWidth="2" /></> },
];

const TaskBar = () => (
  <footer className="flex h-[23px] shrink-0 items-center border-t border-[#b9d39a] bg-[linear-gradient(90deg,#cfeaa8_0%,#d8e8bc_14%,#d9f1a6_20%,#e3e0bb_31%,#e2e9ae_42%,#efe6a6_51%,#e9ecc0_56%,#f9e2d4_64%,#f4e2d4_70%,#c5f3ea_77%,#bdf1ea_100%)] pb-px">
    <div className="flex-1" />
    <button className="flex w-[22px] justify-center" aria-label="Start">
      <svg width="12" height="12" viewBox="0 0 12 12" fill="#1787d4"><path d="M0 0h5.700v5.700H0zM6.300 0H12v5.700H6.300zM0 6.300h5.700V12H0zM6.300 6.300H12V12H6.300z" /></svg>
    </button>
    <label className="ml-[2px] mr-[2px] flex h-[15px] w-[108px] items-center gap-[5px] rounded-full bg-white/70 pl-[5px]">
      <Search size={8} strokeWidth={2.5} className="text-[#333]" />
      <input placeholder="Search" aria-label="Search" className="w-[60px] text-[7px] outline-none placeholder:text-[#666]" />
    </label>
    {APPS.map((a) => (
      <button key={a.name} aria-label={a.name} className="flex w-[22px] flex-col items-center">
        <svg width="13" height="13" viewBox="0 0 15 15" className="mt-[2px]">{a.art}</svg>
        <span className={`mt-[2px] h-px ${a.run === "bar" ? "w-[8px] bg-[#2769c8]" : a.run === "dot" ? "w-[2px] bg-[#777]" : "w-px"}`} />
      </button>
    ))}
    <div className="flex flex-1 items-center justify-end text-[#333]">
      <ChevronUp size={7} strokeWidth={3} />
      <CloudOff size={8} className="ml-[8px]" />
      <span className="ml-[9px]">ENG</span>
      <Globe size={8} className="ml-[9px]" />
      <Volume2 size={9} className="ml-[4px]" />
      <time className="ml-[6px] w-[26px] whitespace-nowrap text-right leading-[8px]">4:52 AM<br />1/7/2026</time>
      <Bell size={8} fill="currentColor" className="ml-[4px] mr-[9px]" />
    </div>
  </footer>
);

/* ---------- floating overlays ---------- */

const FocusSession = () => {
  const dots = Array.from({ length: 8 }, (_, i) => (i * 11 * Math.PI) / 180);
  return (
    <section aria-label="Focus session" className="absolute bottom-[37px] right-[215px] h-[79px] w-[83px] rounded-[4px] bg-[#f1f3f6] text-[#333] shadow-[0_2px_8px_rgba(0,0,0,0.35)]">
      <div className="flex h-[19px] items-center gap-[9px] pl-[6px]">
        <svg width="8" height="8" viewBox="0 0 8 8" fill="none" stroke="#444" aria-hidden="true"><path d="M3 .8h4.200V7H5M.8 3V1.500M1 4.500 3.500 7M3.500 4.500V7H1M3.500 3 5 1.500" /></svg>
        <h2>Focus session</h2>
      </div>
      <div className="mx-auto flex h-[48px] w-[48px] items-center justify-center rounded-full bg-[#f9fafb]">
        <p className="relative z-10 flex items-baseline gap-px leading-none"><span className="text-[11px]">22</span><span className="text-[8px] text-[#666]">min</span></p>
        <svg width="48" height="48" viewBox="-24 -24 48 48" className="absolute" aria-hidden="true">
          {dots.map((a) => <circle key={a} cx={20 * Math.cos(a)} cy={20 * Math.sin(a)} r=".6" fill="#5b6f8f" />)}
        </svg>
      </div>
    </section>
  );
};

const Watermark = () => (
  <div className="pointer-events-none absolute bottom-[58px] right-[58px] w-[118px] whitespace-nowrap font-['Open_Sans',sans-serif] text-[#9a9a9a]/60">
    <p className="text-[9px] leading-[12px]">Activate Windows</p>
    <p className="text-[7px] leading-[9px]">Go to Settings to activate Windows.</p>
  </div>
);

export default function App() {
  return (
    <div className="relative flex h-screen min-h-[480px] flex-col overflow-hidden bg-[#f0f0f0] font-['Roboto','Open_Sans',sans-serif] text-[6px] leading-[9px]">
      <TitleBar />
      <TabRow />
      <Ribbon />
      <OptionsBar />
      <div className="flex min-h-0 flex-1">
        <ProjectBrowser />
        <DrawingArea />
        <Properties />
      </div>
      <StatusBar />
      <TaskBar />
      <FocusSession />
      <Watermark />
    </div>
  );
}
